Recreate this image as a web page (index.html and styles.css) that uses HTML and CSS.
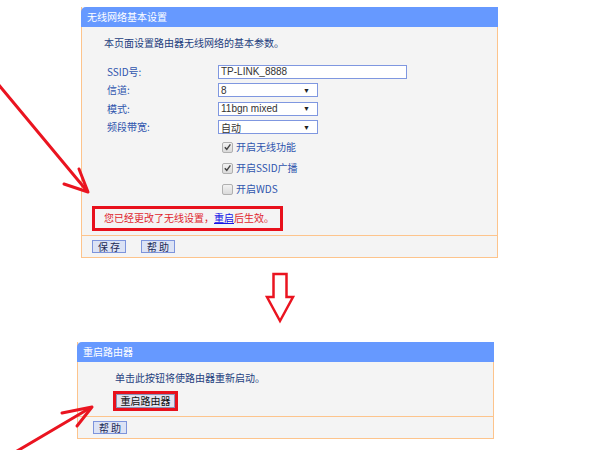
FILE: index.html
```html
<!DOCTYPE html>
<html lang="zh-CN">
<head>
<meta charset="utf-8">
<title>无线网络基本设置</title>
<link rel="stylesheet" href="styles.css">
</head>
<body>
<div class="page">
  <section class="panel panel-wireless">
    <div class="panel-head">无线网络基本设置</div>
    <div class="panel-body">
      <p class="desc">本页面设置路由器无线网络的基本参数。</p>
      <div class="form">
        <span class="label">SSID号:</span>
        <div class="field text-field">TP-LINK_8888</div>
        <span class="label">信道:</span>
        <div class="field select-field"><span>8</span><span class="caret">▼</span></div>
        <span class="label">模式:</span>
        <div class="field select-field"><span>11bgn mixed</span><span class="caret">▼</span></div>
        <span class="label">频段带宽:</span>
        <div class="field select-field"><span class="cjk">自动</span><span class="caret">▼</span></div>
      </div>
      <ul class="checks">
        <li><span class="box"><svg viewBox="0 0 10 10" width="10" height="10"><path d="M2 5.2 L4.2 7.6 L8.2 2" fill="none" stroke="#444" stroke-width="1.6"/></svg></span>开启无线功能</li>
        <li><span class="box"><svg viewBox="0 0 10 10" width="10" height="10"><path d="M2 5.2 L4.2 7.6 L8.2 2" fill="none" stroke="#444" stroke-width="1.6"/></svg></span>开启SSID广播</li>
        <li><span class="box"></span>开启WDS</li>
      </ul>
      <div class="notice">您已经更改了无线设置，<a class="link">重启</a>后生效。</div>
    </div>
    <div class="panel-foot">
      <button class="btn">保 存</button>
      <button class="btn">帮 助</button>
    </div>
  </section>

  <section class="panel panel-reboot">
    <div class="panel-head">重启路由器</div>
    <div class="panel-body reboot-body">
      <p class="desc reboot-desc">单击此按钮将使路由器重新启动。</p>
      <div class="reboot-wrap"><button class="btn btn-reboot">重启路由器</button></div>
    </div>
    <div class="panel-foot reboot-foot">
      <button class="btn">帮 助</button>
    </div>
  </section>
</div>

<svg class="annot" width="600" height="450" viewBox="0 0 600 450">
  <g fill="none" stroke="#ea1420" stroke-width="3" stroke-linecap="round" stroke-linejoin="round">
    <line x1="-2" y1="84" x2="87" y2="191"/>
    <polyline points="79,169 88,192 64,184"/>
    <line x1="12" y1="454" x2="90" y2="408"/>
    <polyline points="62,413 92,407 77,426"/>
  </g>
  <path d="M273.5 274 H286.5 V297 H293 L280 321 L267 297 H273.5 Z" fill="#fff" stroke="#ea1420" stroke-width="2.5" stroke-linejoin="miter"/>
</svg>
</body>
</html>
```

FILE: styles.css
```css
* { box-sizing: border-box; }

html, body {
  margin: 0;
  padding: 0;
  background: #ffffff;
}

body {
  width: 600px;
  height: 450px;
  overflow: hidden;
  position: relative;
  font-family: "Noto Sans CJK SC", "Liberation Sans", sans-serif;
  font-size: 10px;
  color: #24407e;
}

.page {
  display: flex;
  flex-direction: column;
  padding-top: 7px;
}

.panel {
  width: 417px;
  background: #f4f4f4;
  border: 1px solid #fdc48c;
  border-top: none;
}

.panel-wireless { margin-left: 81px; }
.panel-reboot { margin-left: 77px; margin-top: 84px; }

.panel-head {
  height: 20px;
  margin: 0 -1px;
  padding-left: 6px;
  background: #6699ff;
  border-top-left-radius: 5px;
  color: #ffffff;
  font-size: 10px;
  line-height: 20px;
}

.panel-body {
  padding: 9px 0 4px 10px;
  border-bottom: 1px solid #fdc48c;
}

.desc {
  margin: 0 0 0 12px;
  line-height: 14px;
  color: #24407e;
}

.form {
  display: grid;
  grid-template-columns: 111px auto;
  row-gap: 4.4px;
  margin: 15px 0 0 15px;
  align-items: center;
}

.label {
  color: #2f55ad;
  line-height: 14px;
}

.field {
  height: 14px;
  background: #ffffff;
  border: 1.5px solid #7f97e0;
  color: #333333;
  font-family: "Liberation Sans", "Noto Sans CJK SC", sans-serif;
  font-size: 10px;
  line-height: 11px;
  padding-left: 2px;
}

.text-field { width: 189px; }

.select-field {
  width: 100px;
  display: flex;
  justify-content: space-between;
  align-items: center;
  padding-right: 7px;
}

.select-field .cjk { font-family: "Noto Sans CJK SC", sans-serif; }

.caret {
  font-size: 7px;
  color: #222;
  line-height: 7px;
}

.checks {
  list-style: none;
  margin: 6px 0 0 130px;
  padding: 0;
  display: flex;
  flex-direction: column;
  gap: 7px;
}

.checks li {
  display: flex;
  align-items: center;
  height: 14px;
  color: #2f55ad;
  line-height: 14px;
}

.box {
  width: 11px;
  height: 11px;
  margin-right: 3px;
  border: 1px solid #b0b0b0;
  border-radius: 2px;
  background: linear-gradient(#f2f2f2, #dadada);
  display: flex;
  align-items: center;
  justify-content: center;
}

.notice {
  width: 191px;
  height: 25px;
  margin-top: 10px;
  border: 3px solid #e8101c;
  color: #e0262e;
  line-height: 18px;
  padding-left: 9px;
}

.link {
  color: #1515e6;
  text-decoration: underline;
}

.panel-foot {
  height: 21px;
  display: flex;
  align-items: center;
  gap: 15px;
  padding-left: 10px;
}

.btn {
  display: inline-flex;
  align-items: center;
  justify-content: center;
  white-space: nowrap;
  width: 34px;
  height: 13px;
  padding: 0;
  margin: 0;
  background: #dce3f5;
  border: 1.5px solid #7d94dc;
  color: #1d2a55;
  font-family: "Noto Sans CJK SC", sans-serif;
  font-size: 10px;
  line-height: 10px;
  letter-spacing: 0;
}

.reboot-body {
  padding: 9px 0 5px 37px;
}

.reboot-desc { margin: 0; line-height: 14px; }

.reboot-wrap {
  display: inline-flex;
  margin: 6px 0 0 -2px;
  border: 3px solid #e8101c;
}

.btn-reboot {
  width: 59px;
  height: 14px;
  background: #e2e4f0;
  border: 1px solid #8b93b8;
  color: #111;
}

.reboot-foot {
  padding-left: 15px;
}

.annot {
  position: absolute;
  top: 0;
  left: 0;
  pointer-events: none;
}
```
